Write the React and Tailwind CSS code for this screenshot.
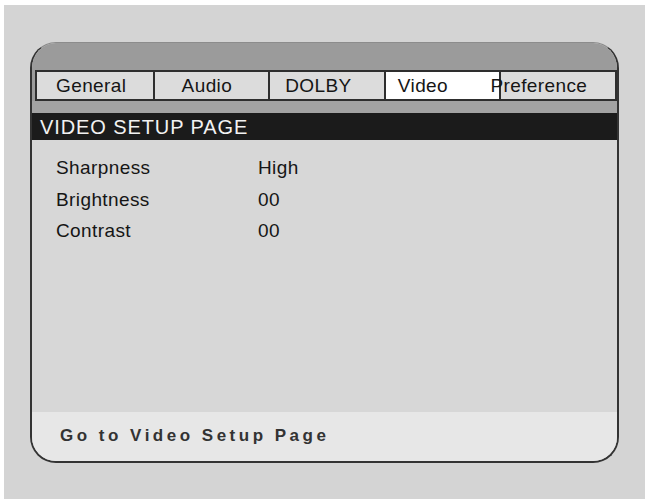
export default function App() {
  const font = { fontFamily: '"Liberation Sans", Arial, sans-serif' };
  const rows = [
    ["Sharpness", "High"],
    ["Brightness", "00"],
    ["Contrast", "00"],
  ];
  return (
    <div className="w-[645px] h-[499px] bg-white pt-[5px] pl-[4px] flex flex-col" style={font}>
      <div className="flex-1 bg-[#d4d4d4] pt-[37px] pl-[26px]">
        <div className="w-[589px] h-[421px] rounded-[26px] border-2 border-[#333333] border-t border-t-[#8c8c8c] overflow-hidden flex flex-col bg-[#d7d7d7]">
          <div className="h-[27px] bg-[#9b9b9b]" />
          <div className="h-[31px] bg-[#9b9b9b] pl-[3px]">
            <div className="h-full grid grid-cols-5 border-2 border-[#2e2e2e] text-[19px] tracking-[0.4px] text-[#151515] leading-none">
              <div className="bg-[#dcdcdc] flex items-center pl-[19px]">General</div>
              <div className="bg-[#dcdcdc] border-l-2 border-[#2e2e2e] flex items-center pl-[27px]">Audio</div>
              <div className="bg-[#dcdcdc] border-l-2 border-[#2e2e2e] flex items-center pl-[15px]">DOLBY</div>
              <div className="bg-white border-l-2 border-[#2e2e2e] flex items-center pl-[12px]">Video</div>
              <div className="bg-[#dcdcdc] border-l-2 border-[#2e2e2e] flex items-center">
                <span className="relative -ml-[11px]">Preference</span>
              </div>
            </div>
          </div>
          <div className="h-[12px] bg-[#a3a3a3]" />
          <div className="h-[27px] bg-[#1b1b1b] text-[#f2f2f2] text-[20px] tracking-[0.9px] leading-none flex items-center pl-[8px]">
            VIDEO SETUP PAGE
          </div>
          <div className="h-[272px] bg-[#d7d7d7] pt-[12px] pl-[24px] text-[19px] tracking-[0.4px] text-[#151515]">
            {rows.map(([k, v]) => (
              <div key={k} className="flex h-[31.5px] items-center leading-none">
                <div className="w-[202px]">{k}</div>
                <div>{v}</div>
              </div>
            ))}
          </div>
          <div className="flex-1 bg-[#e7e7e7] flex items-center pl-[28px] pb-[2px]">
            <span className="font-bold text-[17px] tracking-[3.5px] text-[#333333] leading-none">Go to Video Setup Page</span>
          </div>
        </div>
      </div>
    </div>
  );
}
